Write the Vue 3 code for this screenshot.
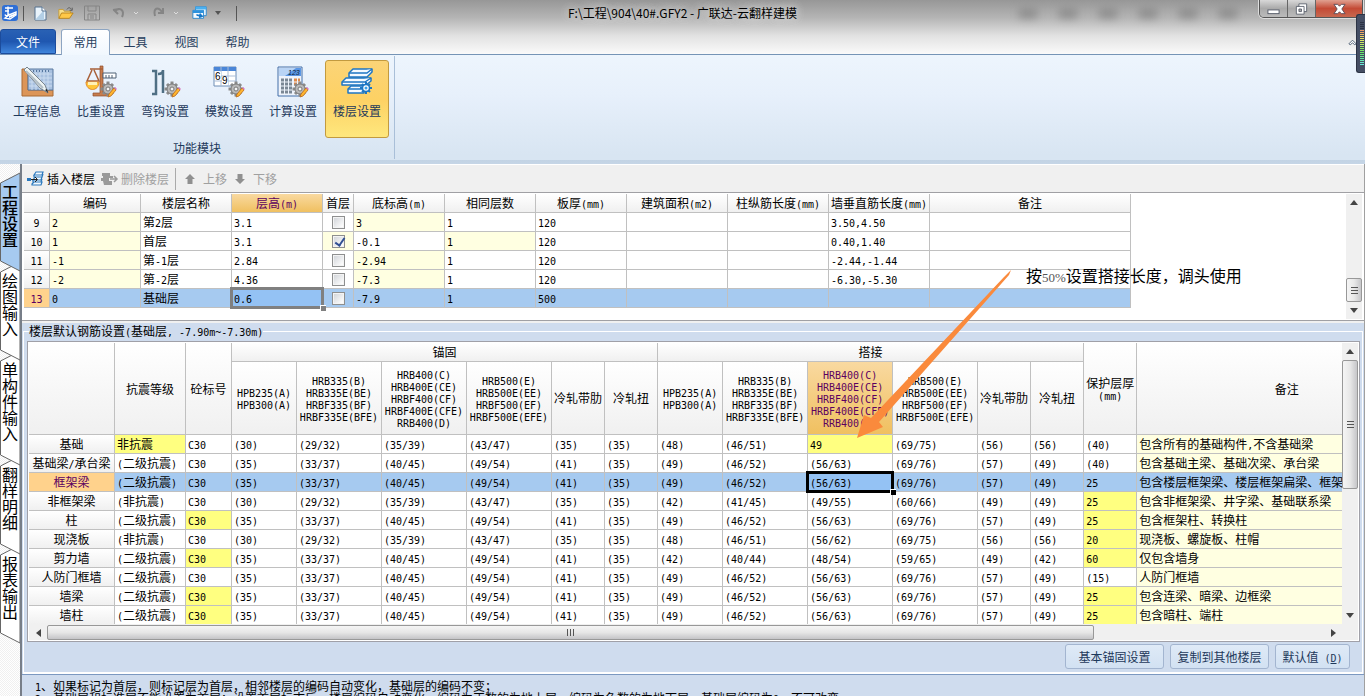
<script setup>
import { h, ref } from 'vue'

// Renders half-width runs in a monospaced face beside the full-width characters.
const Mix = (props) =>
  h('span', { class: 'mix' }, String(props.t).split(/([\x20-\x7e]+)/).filter(Boolean)
    .map((s) => (/^[\x20-\x7e]/.test(s) ? h('span', { class: 'mono' }, s) : s)))
Mix.props = ['t']

const ribbonTabs = ['工具', '视图', '帮助']
const tools = [
  { id: 'info', label: '工程信息' },
  { id: 'weight', label: '比重设置' },
  { id: 'hook', label: '弯钩设置' },
  { id: 'modulus', label: '模数设置' },
  { id: 'calc', label: '计算设置' },
  { id: 'floor', label: '楼层设置' },
]
const sideTabs = ['工程设置', '绘图输入', '单构件输入', '翻样明细', '报表输出']
  .map((label, i) => ({ label, height: label.length * 16 + 25, z: 9 - i, active: i === 0 }))

const floorCols = [26, 91, 91, 91, 31, 91, 91, 91, 101, 101, 101, 201]
const floorHeads = ['', '编码', '楼层名称', '层高(m)', '首层', '底标高(m)', '相同层数', '板厚(mm)', '建筑面积(m2)', '柱纵筋长度(mm)', '墙垂直筋长度(mm)', '备注']
const floors = ref([
  { n: 9, code: '2', name: '第2层', height: '3.1', first: false, base: '3', same: '1', slab: '120', wall: '3.50,4.50' },
  { n: 10, code: '1', name: '首层', height: '3.1', first: true, base: '-0.1', same: '1', slab: '120', wall: '0.40,1.40' },
  { n: 11, code: '-1', name: '第-1层', height: '2.84', first: false, base: '-2.94', same: '1', slab: '120', wall: '-2.44,-1.44' },
  { n: 12, code: '-2', name: '第-2层', height: '4.36', first: false, base: '-7.3', same: '1', slab: '120', wall: '-6.30,-5.30' },
  { n: 13, code: '0', name: '基础层', height: '0.6', first: false, base: '-7.9', same: '1', slab: '500', wall: '' },
])

const barCols = [86, 71, 46, 65, 85, 85, 85, 53, 53, 65, 85, 85, 85, 53, 53, 53, 300]
const grades = [
  ['HPB235(A)', 'HPB300(A)'],
  ['HRB335(B)', 'HRB335E(BE)', 'HRBF335(BF)', 'HRBF335E(BFE)'],
  ['HRB400(C)', 'HRB400E(CE)', 'HRBF400(CF)', 'HRBF400E(CFE)', 'RRB400(D)'],
  ['HRB500(E)', 'HRB500E(EE)', 'HRBF500(EF)', 'HRBF500E(EFE)'],
  ['冷轧带肋'],
  ['冷轧扭'],
]
const heads = [...grades, ...grades]
const second = '(二级抗震)'
const A = ['(35)', '(33/37)', '(40/45)', '(49/54)', '(41)', '(35)']
const B = ['(30)', '(29/32)', '(35/39)', '(43/47)', '(35)', '(35)']
const L = ['(49)', '(46/52)', '(56/63)', '(69/76)', '(57)', '(49)']
const rows = [
  { name: '基础', cells: ['非抗震', 'C30', ...B, '(48)', '(46/51)', '49', '(69/75)', '(56)', '(56)', '(40)'], note: '包含所有的基础构件,不含基础梁', hot: [0, 10] },
  { name: '基础梁/承台梁', cells: [second, 'C30', ...A, ...L, '(40)'], note: '包含基础主梁、基础次梁、承台梁', hot: [] },
  { name: '框架梁', cells: [second, 'C30', ...A, ...L, '25'], note: '包含楼层框架梁、楼层框架扁梁、框架', hot: [], current: true },
  { name: '非框架梁', cells: ['(非抗震)', 'C30', ...B, '(42)', '(41/45)', '(49/55)', '(60/66)', '(49)', '(49)', '25'], note: '包含非框架梁、井字梁、基础联系梁', hot: [14] },
  { name: '柱', cells: [second, 'C30', ...A, ...L, '25'], note: '包含框架柱、转换柱', hot: [1, 14] },
  { name: '现浇板', cells: ['(非抗震)', 'C30', ...B, '(48)', '(46/51)', '(56/62)', '(69/75)', '(56)', '(56)', '20'], note: '现浇板、螺旋板、柱帽', hot: [14] },
  { name: '剪力墙', cells: [second, 'C30', ...A, '(42)', '(40/44)', '(48/54)', '(59/65)', '(49)', '(42)', '60'], note: '仅包含墙身', hot: [1, 14] },
  { name: '人防门框墙', cells: [second, 'C30', ...A, ...L, '(15)'], note: '人防门框墙', hot: [] },
  { name: '墙梁', cells: [second, 'C30', ...A, ...L, '25'], note: '包含连梁、暗梁、边框梁', hot: [1, 14] },
  { name: '墙柱', cells: [second, 'C30', ...A, ...L, '25'], note: '包含暗柱、端柱', hot: [1, 14] },
]
const notes = [
  '1、如果标记为首层，则标记层为首层，相邻楼层的编码自动变化，基础层的编码不变；',
  '2、基础层和标准层不能设置为首层；设置首层标志后，楼层编码自动变化，编码为正数的为地上层，编码为负数的为地下层，基础层编码为0，不可改变。',
]
</script>

<template>
  <div class="window">
    <header class="title">
      <div class="quick">
        <svg class="logo" viewBox="0 0 16 16"><rect width="16" height="16" rx="3" fill="#2f6fd6" /><path d="M3 3h8M6 1.500v8M3 6h4M3 9.500c1 2.500 3 1 4-1M7 10l7-3v3l-6 4-5-1z" fill="none" stroke="#fff" stroke-width="1.400" /><path d="M7 11l7-3v2l-7 3z" fill="#fff" /></svg>
        <i class="bar"></i>
        <button aria-label="新建"><svg viewBox="0 0 16 16"><path d="M3 2h7l4 4v9H3z" fill="#e9f3fb" stroke="#55718e" /><path d="M3 15L12 5v10z" fill="#b3cfe6" /><path d="M10 2v4h4" fill="#fff" stroke="#55718e" /></svg></button>
        <button aria-label="打开"><svg viewBox="0 0 18 16"><path d="M1 14V4h5l1 2h7v3" fill="#f8df8b" stroke="#c79a30" /><path d="M1 14L4 8h13l-4 6z" fill="#ffc848" stroke="#b68018" /><path d="M10 4c2-3 4-2 5 0m1-2v3h-3" fill="none" stroke="#555" /></svg></button>
        <button aria-label="保存"><svg viewBox="0 0 16 16"><path d="M.5 1h15v14H.5z M4 1v5h8V1M4 15V9h8v6M6 11h4M6 13h4" fill="none" stroke="#858585" /></svg></button>
        <button aria-label="撤销"><svg viewBox="0 0 26 16"><path d="M1 5l6-1M2 5l4 4M3 6c5-4 10-1 7 6" fill="none" stroke="#858585" stroke-width="2" /><path d="M22 7l2 2 2-2" fill="none" stroke="#ddd" stroke-width="1" /></svg></button>
        <button aria-label="恢复"><svg viewBox="0 0 26 16"><path d="M11 3v5H6M10 7C6 1 1 3 3 11" fill="none" stroke="#858585" stroke-width="2" /><path d="M22 7l2 2 2-2" fill="none" stroke="#ddd" stroke-width="1" /></svg></button>
        <button aria-label="窗口"><svg viewBox="0 0 18 16"><path d="M4 1h12v10H4z" fill="#eaf6ff" stroke="#2384cc" /><path d="M4 1h12v3H4z" fill="#4ab0f0" /><path d="M1 5h12v9H1z" fill="#f6fbff" stroke="#2384cc" /><path d="M1 5h12v3H1z" fill="#2d92dd" /><path d="M5 9l3 1 1-2 4 4-5 2 0-2-3-1z" fill="#1677c8" /></svg></button>
        <svg class="drop" viewBox="0 0 6 4"><path d="M0 0h6L3 4z" fill="#555" /></svg>
        <i class="bar"></i>
      </div>
      <h1>F:\工程\904\40#.GFY2 - 广联达-云翻样建模</h1>
      <div class="behind"><i v-for="k in 6" :key="k"></i></div>
      <div class="winbtns">
        <button aria-label="最小化"><svg viewBox="0 0 14 12"><rect x="1" y="7" width="12" height="4" fill="#fff" stroke="#555b68" /></svg></button>
        <button aria-label="还原"><svg viewBox="0 0 14 14"><path d="M4 1h9v9H4z" fill="#fff" stroke="#555b68" /><path d="M1 4h9v9H1z" fill="#fff" stroke="#555b68" /><path d="M4 7h3v3H4z" fill="#aaa" stroke="#555b68" /></svg></button>
        <button class="close" aria-label="关闭"><svg viewBox="0 0 14 12"><path d="M1 1h4l2 2 2-2h4L9.500 6l3.500 5H9L7 9l-2 2H1l3.500-5z" fill="#fff" stroke="#5b4a55" /></svg></button>
      </div>
    </header>
    <nav class="tabs">
      <button class="file">文件</button>
      <button class="on">常用</button>
      <button v-for="t in ribbonTabs" :key="t">{{ t }}</button>
      <button class="fold" aria-label="折叠功能区"><svg viewBox="0 0 10 8"><path d="M1 6l4-4 4 4-1.500 1L5 5 2.500 7z" fill="#fff" stroke="#46586e" /></svg></button>
    </nav>

    <section class="ribbon">
      <div class="group">
        <div class="tools">
          <button v-for="t in tools" :key="t.id" :class="{ chosen: t.id === 'floor' }">
            <svg viewBox="0 0 32 32">
              <template v-if="t.id === 'info'">
                <path d="M1 3v27h31v-6H7V3z" fill="#dc9558" stroke="#a96a34" />
                <path d="M7 3h25v21H7z" fill="#a9c1e0" stroke="#58799f" />
                <path d="M11 4v20M15 4v20M19 4v20M23 4v20M27 4v20M8 8h23M8 12h23M8 16h23M8 20h23" stroke="#cbdcf0" />
                <path d="M9 5h21" stroke="#56779f" stroke-width="2" stroke-dasharray="1 2" />
                <path d="M3 4l3-3 18 18 3 8-8-5z" fill="#edf3f3" stroke="#77838d" /><path d="M5 5l17 17" stroke="#b2bec6" stroke-width="2" /><path d="M24 24l3 3-1-4z" fill="#222" />
              </template>
              <template v-if="t.id === 'weight'">
                <path d="M15 0h3v27h5v3H8v-3h7z" fill="#c77c4c" stroke="#8f4f2c" stroke-width=".7" />
                <path d="M5 3h13M7 4L2 15h12L9 4" fill="none" stroke="#a86038" stroke-width="1.500" />
                <path d="M1 16h13c0 10-13 10-13 0z" fill="#ffc63a" stroke="#e28a2c" /><path d="M3 16h9v3H3z" fill="#fff1b8" />
                <path d="M18 7h13v5H18z" fill="#fff" stroke="#4f6074" /><path d="M21 9v3M24 9v3M27 9v3" stroke="#4f6074" />
              </template>
              <path v-if="t.id === 'hook'" d="M3 5h4v23H3M9 8c4 0 5-2 5-4v23" fill="none" stroke="#4f6f84" stroke-width="2.500" />
              <template v-if="t.id === 'modulus'">
                <path d="M1 1h22v19H1z" fill="#fff" stroke="#6f8eb5" /><path d="M1 1h22v4H1z" fill="#4a86d8" /><path d="M8 1v19M15 1v19M1 10h22M1 15h22" stroke="#a9bdd8" />
                <path d="M2 6h6v8H2zM9 11h6v8H9z" fill="#fff" />
                <text x="2" y="14" class="digit">6</text><text x="9" y="18" class="digit">9</text>
              </template>
              <template v-if="t.id === 'calc'">
                <path d="M1 1h24v29H1z" fill="#eef3fb" stroke="#436fa8" /><path d="M2 2h22v8H2z" fill="#5b97e6" /><path d="M2 2h17L8 10H2z" fill="#b9d4f5" />
                <text x="11" y="9" class="small-digit">123</text>
                <path d="M4 14h11M4 18h11M4 22h11M4 26h11" stroke="#7a8794" stroke-width="3" stroke-dasharray="3 1" /><path d="M17 14h6M17 18h6" stroke="#e08a4a" stroke-width="3" stroke-dasharray="3 1" />
              </template>
              <template v-if="t.id === 'floor'">
                <g fill="#f4faff" stroke="#1d76c4" stroke-width="1.500" stroke-linejoin="round">
                  <path d="M10 20h13v7H7v-4z" /><path d="M7 23h14" />
                  <path d="M5 12h25v3l-5 4H1v-3z" /><path d="M1 16h23l6-4" />
                  <path d="M12 3h19v3l-5 5H8V7z" /><path d="M8 7h18l5-4" />
                </g>
                <g transform="translate(25 22)" stroke="#1d76c4" stroke-width="2"><path d="M0-6V6M-6 0H6M-4-4L4 4M4-4L-4 4" /><circle r="3.500" fill="#fff" stroke-width="1.500" /><circle r="1.500" fill="#38a0e8" stroke="none" /></g>
              </template>
              <g v-if="t.id !== 'info' && t.id !== 'floor'" transform="translate(23 23)">
                <path d="M0-7.500V7.500M-7.500 0H7.500M-5-5L5 5M5-5L-5 5" stroke="#8a8a8a" stroke-width="3" />
                <circle r="5" fill="#b9b9b9" stroke="#7c7c7c" /><circle r="2" fill="#f4f4f4" stroke="#777" />
                <path d="M0 8l1-3 5-6 2 2-5 6z" fill="#ffb52e" stroke="#b9681c" stroke-width=".8" /><path d="M6-1l1-1 2 2-1 1z" fill="#d87ac0" />
              </g>
            </svg>
            <span>{{ t.label }}</span>
          </button>
        </div>
        <p>功能模块</p>
      </div>
    </section>

    <div class="body">
      <nav class="side">
        <button v-for="s in sideTabs" :key="s.label" :class="{ active: s.active }" :style="{ height: s.height + 'px', zIndex: s.z }">
          <svg :viewBox="`0 0 20 ${s.height}`"><path :d="`M20 0L.5 10V${s.height - 1}L20 ${s.height + 9}z`" /></svg>
          <span>{{ s.label }}</span>
        </button>
      </nav>

      <main>
        <div class="toolbar">
          <button class="cmd">
            <svg viewBox="0 0 17 16"><g fill="#f4faff" stroke="#2a78bd" stroke-width="1.200"><path d="M7 4l2-3h7l-1 3zM7 4v2h8l1-3M6 9l2-3h7l-1 3zM6 9v2h8l1-3M5 13l2-2h8l-1 3H5z" /></g><path d="M0 7h4v3H0z" fill="#2a78bd" /><path d="M4 8.500h6M8 6l2.500 2.500L8 11" stroke="#222" fill="none" /></svg>插入楼层</button>
          <button class="cmd" disabled>
            <svg viewBox="0 0 17 16"><path d="M1 2h8v3h3v2H2V5h-1zM0 7h8v3H0zM2 10h9v4H3z" fill="#9a9a9a" /><path d="M9 8h6M13 5l3 3-3 3" stroke="#9a9a9a" stroke-width="1.500" fill="none" /></svg>删除楼层</button>
          <i></i>
          <button class="cmd" disabled><svg class="arrow" viewBox="0 0 12 12"><path d="M6 1l5 5H8.500v5h-5V6H1z" fill="#909090" /></svg>上移</button>
          <button class="cmd" disabled><svg class="arrow" viewBox="0 0 12 12"><path d="M6 11L1 6h2.500V1h5v5H11z" fill="#909090" /></svg>下移</button>
        </div>

        <div class="floors">
          <div class="view">
            <table>
              <colgroup><col v-for="(w, i) in floorCols" :key="i" :style="{ width: w + 'px' }" /></colgroup>
              <thead><tr><th v-for="(t, i) in floorHeads" :key="i" scope="col" :class="{ picked: i === 3 }"><Mix :t="t" /></th></tr></thead>
              <tbody>
                <tr v-for="f in floors" :key="f.n" :class="{ current: f.n === 13 }">
                  <th scope="row"><Mix :t="f.n" /></th>
                  <td class="soft"><Mix :t="f.code" /></td>
                  <td><Mix :t="f.name" /></td>
                  <td :class="{ focus: f.n === 13, grey: f.n === 13 }"><Mix :t="f.height" /></td>
                  <td class="tick" :class="{ soft: f.first }"><input v-model="f.first" type="checkbox" :aria-label="f.name + ' 首层'" /></td>
                  <td :class="{ soft: !f.first }"><Mix :t="f.base" /></td>
                  <td :class="{ soft: f.first }"><Mix :t="f.same" /></td>
                  <td><Mix :t="f.slab" /></td>
                  <td></td><td></td>
                  <td><Mix :t="f.wall" /></td>
                  <td></td>
                </tr>
              </tbody>
            </table>
          </div>
          <div class="vscroll low">
            <button aria-label="向上"><svg viewBox="0 0 8 5"><path d="M4 0l4 5H0z" /></svg></button>
            <div class="room"></div>
            <div class="thumb"><i></i><i></i><i></i></div>
            <button aria-label="向下"><svg viewBox="0 0 8 5"><path d="M4 5L0 0h8z" /></svg></button>
          </div>
        </div>

        <fieldset>
          <legend><Mix t="楼层默认钢筋设置(基础层, -7.90m~-7.30m)" /></legend>
          <div class="bars">
            <div class="across">
              <div class="view">
                <table class="rebar">
                  <colgroup><col v-for="(w, i) in barCols" :key="i" :style="{ width: w + 'px' }" /></colgroup>
                  <thead>
                    <tr>
                      <th rowspan="2"></th><th rowspan="2" scope="col">抗震等级</th><th rowspan="2" scope="col">砼标号</th>
                      <th colspan="6" scope="colgroup">锚固</th><th colspan="6" scope="colgroup">搭接</th>
                      <th rowspan="2" scope="col">保护层厚<br /><Mix t="(mm)" /></th><th rowspan="2" scope="col">备注</th>
                    </tr>
                    <tr class="grades">
                      <th v-for="(g, i) in heads" :key="i" scope="col" :class="{ picked: i === 8 }"><div v-for="s in g" :key="s"><Mix :t="s" /></div></th>
                    </tr>
                  </thead>
                  <tbody>
                    <tr v-for="r in rows" :key="r.name" :class="{ current: r.current }">
                      <th scope="row"><Mix :t="r.name" /></th>
                      <td v-for="(c, i) in r.cells" :key="i" :class="{ hot: r.hot.includes(i), focus: r.current && i === 10 }"><Mix :t="c" /></td>
                      <td class="soft"><Mix :t="r.note" /></td>
                    </tr>
                  </tbody>
                </table>
              </div>
              <div class="vscroll">
                <button aria-label="向上"><svg viewBox="0 0 8 5"><path d="M4 0l4 5H0z" /></svg></button>
                <div class="thumb tall"><i></i><i></i><i></i></div>
                <div class="room"></div>
                <button aria-label="向下"><svg viewBox="0 0 8 5"><path d="M4 5L0 0h8z" /></svg></button>
              </div>
            </div>
            <div class="hscroll">
              <button aria-label="向左"><svg viewBox="0 0 5 8"><path d="M0 4l5-4v8z" /></svg></button>
              <div class="track"><div class="thumb"><i></i><i></i><i></i></div></div>
              <button aria-label="向右"><svg viewBox="0 0 5 8"><path d="M5 4L0 0v8z" /></svg></button>
            </div>
          </div>
          <div class="actions">
            <button class="wide">基本锚固设置</button>
            <button class="wide">复制到其他楼层</button>
            <button>默认值<Mix t=" (" /><u><Mix t="D" /></u><Mix t=")" /></button>
          </div>
        </fieldset>
        <div class="notes"><p v-for="n in notes" :key="n"><Mix :t="n" /></p></div>
      </main>
    </div>

    <svg class="pointer" viewBox="0 0 160 172"><path d="M159 5L157 10 27 157l4 5L5 173 12 150l7 3L152 12z" fill="#fa8a3c" /></svg>
    <p class="remark">按<span>50%</span>设置搭接长度，调头使用</p>
    <div class="meter"><i v-for="k in 22" :key="k" :style="{ background: k < 5 ? '#2c3344' : `hsl(${20 + (k - 5) * 9}, 75%, 66%)` }"></i></div>
  </div>
</template>

<style>
body { background: #cfdcee; }
.mix { white-space: pre; }
.mono { font-family: "DejaVu Sans Mono", monospace; font-size: 10px; line-height: 0; }
</style>

<style scoped>
* { box-sizing: border-box; }
.window { position: relative; display: flex; flex-direction: column; height: 100vh; overflow: hidden; font: 12px/18px "Noto Sans CJK SC", sans-serif; color: #000; background: linear-gradient(#979797, #b5b5b5 18px, #e2e2e2 36px, #fafafa 54px); }
button { margin: 0; padding: 0; border: 0; background: none; font: inherit; color: inherit; }
p, h1 { margin: 0; }
svg { display: block; overflow: visible; }
.title { display: flex; justify-content: space-between; position: relative; height: 28px; flex: none; }
.quick { display: flex; align-items: center; height: 26px; padding-left: 2px; color: #555; }
.quick svg { width: 16px; height: 16px; }
.quick .logo { margin-right: 5px; }
.quick .bar { width: 1px; height: 15px; background: #555; }
.quick button { margin-left: 8px; }
.quick button:nth-of-type(n+2) { margin-left: 10px; }
.quick button:nth-of-type(4) svg, .quick button:nth-of-type(5) svg { width: 30px; }
.quick button:nth-of-type(6) { margin-left: 12px; }
.quick .drop { width: 6px; height: 4px; margin: 0 15px 0 7px; }
h1 { position: absolute; inset: 4px 0 auto 0; text-align: center; font-size: 12px; font-weight: 400; line-height: 18px; text-shadow: 0 0 8px #ddd, 0 0 8px #ddd; }
.behind { display: flex; gap: 22px; margin: 8px 22px 0 auto; filter: blur(4px); }
.behind i { width: 18px; height: 10px; background: #8d8d8d; }
.winbtns { display: flex; height: 18px; margin-right: 2px; border: 1px solid #555; border-top: 0; border-radius: 0 0 5px 5px; overflow: hidden; box-shadow: 0 0 0 1px #ddd; }
.winbtns button { width: 28px; display: grid; place-items: center; border-right: 1px solid #666; background: linear-gradient(#d8d8d8, #aaa 50%, #bbb); }
.winbtns .close { width: 46px; border: 0; background: linear-gradient(#e0a090, #c44a35 50%, #c86850); }
.winbtns svg { width: 13px; height: 12px; }
.tabs { display: flex; height: 27px; flex: none; border-bottom: 1px solid #7594b6; color: #283f5e; padding-top: 1px; }
.tabs button { width: 51px; padding-top: 1px; }
.tabs .file { width: 56px; margin-right: 5px; padding: 0; color: #fff; border: 1px solid #1c4c9c; border-radius: 3px 3px 0 0; background: linear-gradient(#2961b4, #1f57b0 50%, #3f85dc); }
.tabs .on { width: 49px; height: 27px; padding: 0 0 2px; border: 1px solid #8da5c2; border-bottom: 0; border-radius: 3px 3px 0 0; background: linear-gradient(#fff, #f0f7fe); }
.tabs .fold { width: 10px; margin: 0 7px 0 auto; }
.tabs .fold svg { width: 9px; height: 8px; }
.ribbon { height: 109px; flex: none; background: linear-gradient(#edf5fd, #e7f0fb 40px, #d8e5f2 100px); border-bottom: 4px solid #a9bfd8; border-image: linear-gradient(#839fbf, #c5d5e6) 4; }
.group { width: 395px; height: 103px; margin-top: 1px; padding: 4px 5px 0; border-right: 1px solid #a9bfd8; color: #1e395b; text-align: center; }
.tools { display: flex; }
.tools button { width: 64px; height: 78px; padding: 5px 0 0; border: 1px solid transparent; border-radius: 3px; display: flex; flex-direction: column; align-items: center; gap: 4px; }
.tools svg { width: 32px; height: 32px; }
.tools .chosen { border-color: #c29a3f; background: linear-gradient(#fbd477, #fdd164 50%, #fee77d); }
.group p { padding-top: 1px; }
.digit { font: 10px "Liberation Sans", sans-serif; }
.small-digit { font: italic 7px "Liberation Sans", sans-serif; fill: #123; }
.body { display: flex; flex: 1; min-height: 0; }
.side { width: 20px; flex: none; padding-top: 9px; background: repeating-conic-gradient(#fff 0 25%, #f0f0f0 0 50%) 0 0 / 2px 2px; }
.side button { position: relative; display: flex; flex-direction: column; width: 20px; padding-top: 10px; align-items: center; font-size: 16px; line-height: 16px; }
.side svg { position: absolute; inset: 0; width: 20px; height: 100%; z-index: -1; }
.side span { width: 16px; word-break: break-all; }
.side path { fill: #fff; stroke: #666; }
.side .active { font-weight: 500; }
.side .active path { fill: #a6caf0; }
main { flex: 1; min-width: 0; display: flex; flex-direction: column; border-left: 2px solid #777e88; border-right: 1px solid #a0a0a0; z-index: 10; background: #cfdcee; }
.toolbar { display: flex; align-items: center; height: 29px; flex: none; padding: 0 5px; background: #f0f0f0; border-top: 1px solid #fff; border-bottom: 1px solid #a0a0a4; }
.cmd { display: flex; align-items: center; gap: 3px; margin-right: 6px; }
.cmd:disabled { color: #a0a0a0; }
.cmd svg { width: 17px; height: 16px; }
.cmd .arrow { width: 14px; height: 12px; margin-right: 3px; }
.toolbar i { width: 1px; height: 22px; margin-right: 7px; background: #aaa; }
.floors { display: flex; height: 128px; flex: none; padding: 1px 1px 1px 2px; background: #fff; border-bottom: 1px solid #a0a0a4; box-shadow: 0 2px #f0f0f0; }
.view { flex: 1; min-width: 0; overflow: hidden; background: #fff; }
table { table-layout: fixed; width: 0; border-collapse: separate; border-spacing: 0; }
td, th { height: 19px; padding: 0 2px; border: solid #c0c0c0; border-width: 0 1px 1px 0; font-weight: 400; line-height: 18px; white-space: nowrap; }
th { padding: 0; background: linear-gradient(#fff, #f0f0f0); }
.soft { background: #ffffe1; }
.hot { background: #ffff80; }
.picked { color: #5b0060; background: linear-gradient(#f9d9a0, #f0c060); }
.current td { background: #a6caf0; }
.current th { color: #5b0060; background: #ffd28c; }
.current .focus { position: relative; background: #94c2f4; }
.focus::before { content: ""; position: absolute; inset: -2px; border: 3px solid #000; }
.focus::after { content: ""; position: absolute; right: -4px; bottom: -4px; width: 5px; height: 5px; background: #000; border: solid #fff; border-width: 1px 0 0 1px; }
.grey::before { border-color: #808080; }
.grey::after { background: #808080; }
.tick { text-align: center; line-height: 0; }
.tick input { appearance: none; width: 13px; height: 13px; margin: 0; border: 1px solid #8e8f8f; background: linear-gradient(135deg, #d3d6da, #fff) content-box, #f4f4f4; padding: 1px; vertical-align: middle; position: relative; }
.tick input:checked::after { content: ""; position: absolute; left: 4px; top: 0; width: 4px; height: 8px; border: solid #314f94; border-width: 0 2px 2px 0; transform: rotate(35deg); }
.vscroll { width: 16px; flex: none; display: flex; flex-direction: column; background: #f0f0f0; }
.vscroll button { height: 17px; display: grid; place-items: center; }
.vscroll svg { width: 8px; height: 5px; }
.vscroll path, .hscroll path { fill: #444; }
.room { flex: 1; }
.thumb { display: flex; align-items: center; justify-content: center; gap: 2px; border: 1px solid #989898; border-radius: 2px; }
.vscroll .thumb { flex-direction: column; height: 24px; background: linear-gradient(90deg, #f5f5f5, #e8e8e8 50%, #c6c6c9); }
.vscroll .tall { height: 129px; }
.vscroll i { width: 7px; height: 1px; background: #555; }
.low { margin-right: 1px; }
fieldset { min-width: 0; margin: 3px 1px 0; padding: 3px 2px 3px 3px; border: 1px solid #fff; box-shadow: 0 1px #fff; }
legend { padding: 0; margin-left: 2px; height: 14px; line-height: 14px; }
.bars { padding: 1px; border: 1px solid #a0a0a8; background: #fff; }
.across { display: flex; }
.rebar thead th { line-height: 12px; }
.grades th { height: 73px; }
.rebar tbody tr:last-child > * { height: 18px; border-bottom: 0; }
.hscroll { display: flex; height: 16px; padding: 1px 16px 0 0; background: #f0f0f0; }
.hscroll button { width: 18px; display: grid; place-items: center; }
.hscroll svg { width: 5px; height: 8px; }
.track { flex: 1; display: flex; }
.track .thumb { width: 82%; background: linear-gradient(#f5f5f5, #e6e6e6 50%, #c4c4c7); }
.track i { width: 1px; height: 7px; background: #555; }
.actions { display: flex; justify-content: flex-end; gap: 6px; padding: 2px 10px 0 0; }
.actions button { width: 75px; height: 25px; border: 1px solid #a3b5d0; border-radius: 3px; color: #1e395b; background: linear-gradient(#dfeaf7, #d2e1f2); }
.actions .wide { width: 99px; }
.notes { flex: 1; min-height: 0; margin-top: 1px; padding: 5px 0 0 13px; border-top: 1px solid #7b98c0; line-height: 12px; white-space: nowrap; }
.pointer { position: absolute; left: 852px; top: 265px; width: 160px; height: 172px; z-index: 20; }
.remark { position: absolute; left: 1026px; top: 264px; z-index: 20; font-size: 16px; line-height: 22px; }
.remark span { font-family: "Liberation Serif", serif; font-size: 13px; color: #555; }
.meter { position: absolute; right: 0; top: 14px; width: 9px; height: 59px; padding: 7px 1px 0 3px; border-radius: 3px 0 0 3px; background: #454e64; border: 1px solid #2c3344; border-right: 0; z-index: 20; display: flex; flex-direction: column; gap: 1px; }
.meter i { height: 1px; flex: none; }
</style>
